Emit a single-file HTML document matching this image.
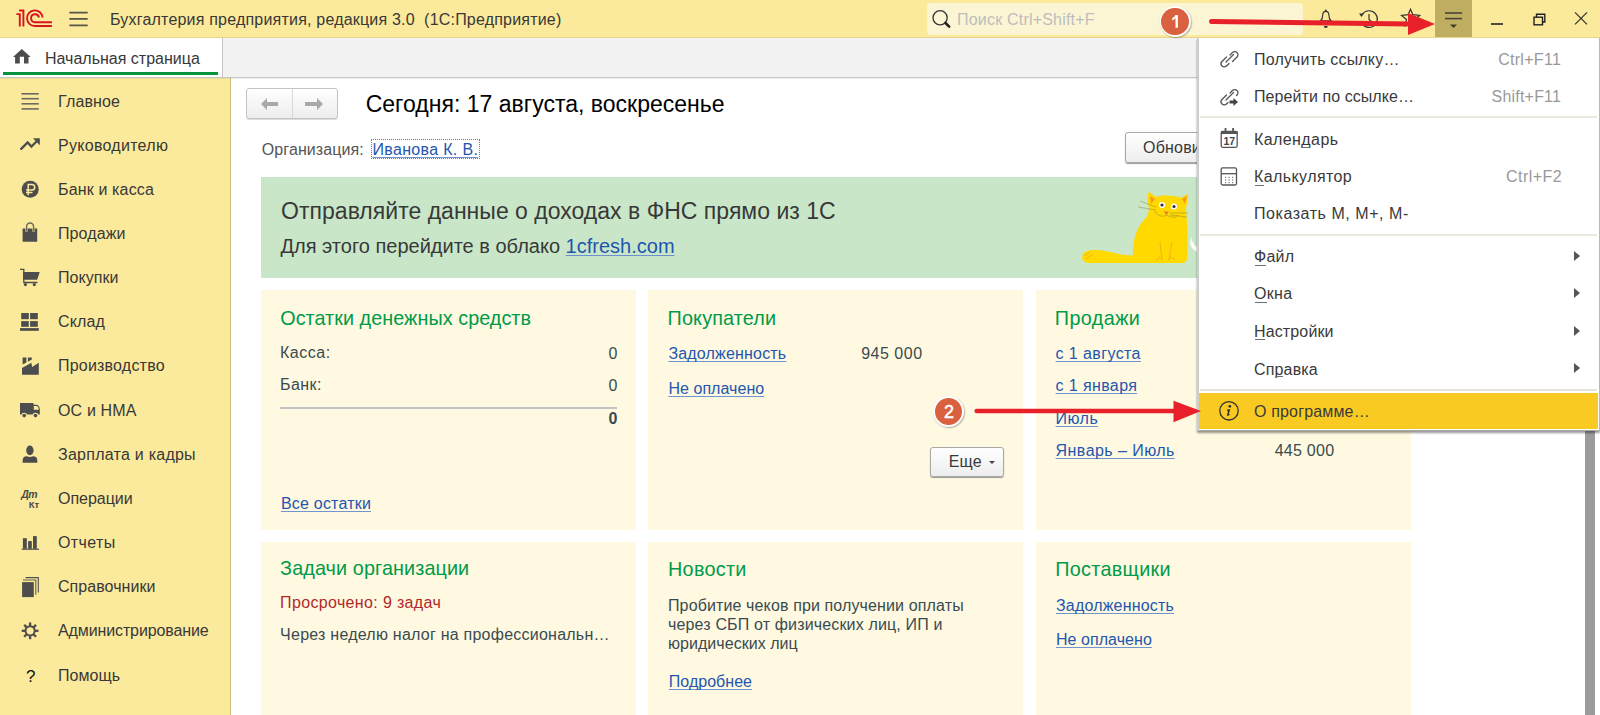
<!DOCTYPE html>
<html><head><meta charset="utf-8"><style>
html,body{margin:0;padding:0;width:1600px;height:715px;overflow:hidden;background:#fff}
body{position:relative;font-family:"Liberation Sans",sans-serif}
.r{position:absolute}
.t{position:absolute;white-space:nowrap;line-height:1}
</style></head><body>
<div class="r" style="left:0px;top:0px;width:1600px;height:37px;background:#FBEA9C"></div>
<div class="r" style="left:0px;top:37px;width:1600px;height:1px;background:#E8D690"></div>
<div class="r" style="left:0px;top:38px;width:1600px;height:39px;background:#F2F2F2"></div>
<div class="r" style="left:0px;top:77px;width:1600px;height:1px;background:#C8C8C8"></div>
<div class="r" style="left:0px;top:38px;width:222px;height:39px;background:#fff"></div>
<div class="r" style="left:222px;top:38px;width:1px;height:39px;background:#C8C8C8"></div>
<div class="r" style="left:3px;top:72px;width:215px;height:3px;background:#08943F"></div>
<div class="r" style="left:0px;top:78px;width:230px;height:637px;background:#FBEA9C"></div>
<div class="r" style="left:230px;top:78px;width:1px;height:637px;background:#CBBD7B"></div>
<div class="r" style="left:231px;top:78px;width:1369px;height:637px;background:#fff"></div>
<div class="r" style="left:0px;top:78px;width:1600px;height:1px;background:rgba(0,0,0,0.07)"></div>
<div class="r" style="left:927px;top:3px;width:376px;height:32px;background:#FCF5D3;border-radius:4px"></div>
<svg class="r" style="left:0;top:0" width="1600" height="715"><g fill="none" stroke="#D7141E" stroke-width="1.9" stroke-linecap="butt"><path d="M16.4 14.1 H19.8 V26.5"/><path d="M19.1 10.5 H23.4 V26.5"/><path d="M42.6 17.5 A7.8 7.8 0 1 0 34.9 26 H51.9"/><path d="M39 17.5 A4 4 0 1 0 34.9 22.2 H51.9"/></g><g stroke="#57544A" stroke-width="1.7" stroke-linecap="round"><path d="M70 12.55 H87"/><path d="M70 18.9 H87"/><path d="M70 25.3 H87"/></g><circle cx="940.1" cy="17.7" r="7.1" fill="none" stroke="#333" stroke-width="1.3"/><path d="M945.5 23 L949.2 26.7" stroke="#222" stroke-width="2.6" stroke-linecap="round"/><g fill="none" stroke="#333" stroke-width="1.2"><path d="M1320.6 20.8 Q1322.6 19.2 1322.7 15.2 Q1322.9 11.4 1325.8 11.4 Q1328.7 11.4 1328.9 15.2 Q1329 19.2 1331 20.8 Z"/></g><circle cx="1325.8" cy="10.5" r="1" fill="#333"/><path d="M1323.8 26 A2 2 0 0 0 1327.8 26 Z" fill="#333"/><g fill="none" stroke="#333" stroke-width="1.2"><path d="M1362.5 14 A8.3 8.3 0 1 1 1361 21"/><path d="M1369 14 V19.5 L1372 22"/></g><path d="M1359 13.5 L1364 13.5 L1361.5 17 Z" fill="#333"/><path d="M1410.5 9.3 L1412.8 14.6 L1419.8 15.5 L1414.5 19.5 L1416 26 L1410.5 22.6 L1405 26 L1406.5 19.5 L1401.5 15.5 L1408.2 14.6 Z" fill="none" stroke="#333" stroke-width="1.2" stroke-linejoin="miter"/><rect x="1435" y="0" width="37" height="37" fill="#BFAE62"/><g stroke="#4A4536" stroke-width="1.6"><path d="M1445 13 H1462"/><path d="M1445 18.6 H1462"/></g><path d="M1450 24.5 H1457 L1453.5 28 Z" fill="#3F3A2E"/><path d="M1491 24 H1503" stroke="#222" stroke-width="1.6"/><g fill="none" stroke="#222" stroke-width="1.4"><rect x="1534" y="17.2" width="8.5" height="7.6"/><path d="M1536.5 17.2 V14.2 H1544.8 V22 H1542.5"/></g><g stroke="#333" stroke-width="1.2"><path d="M1575 12.3 L1587 24.3"/><path d="M1587 12.3 L1575 24.3"/></g><path d="M21.8 49.1 L30.6 57 H28.5 V63.6 H24 V56.7 H19.8 V63.6 H15.1 V57 H13 Z" fill="#4D4D4D"/><g fill="#4D4D4D"><g stroke="#6B6A62" stroke-width="1.6"><path d="M21.5 93.8 H38.8"/><path d="M21.5 98.7 H38.8"/><path d="M21.5 103.8 H38.8"/><path d="M21.5 108.9 H38.8"/></g><path d="M21.2 148.9 L27.6 142.4 L31.4 146.6 L36 142" fill="none" stroke="#4D4D4D" stroke-width="2.3" stroke-linecap="round" stroke-linejoin="miter"/><path d="M33 138.2 H39.8 V145.2 Z"/><circle cx="30.2" cy="189.3" r="8.5"/><g fill="none" stroke="#FBEA9C" stroke-width="1.5"><path d="M28.2 195.3 V184.6 H32 A2.75 2.75 0 0 1 32 190.1 H26"/><path d="M26 192.5 H32.5"/></g><path d="M22.6 228.4 H25.4 V231 Q25.4 232 26.5 232 Q27.6 232 27.6 231 V228.4 H32.4 V231 Q32.4 232 33.5 232 Q34.6 232 34.6 231 V228.4 H37.2 V241.8 H22.6 Z"/><path d="M26.6 231.5 V226.5 A3.5 3.5 0 0 1 33.6 226.5 V231.5" fill="none" stroke="#6B695A" stroke-width="1.4"/><path d="M20 269.4 H23.8 V282.5 H37.5" fill="none" stroke="#4D4D4D" stroke-width="1.3"/><path d="M23.1 272.1 H39.7 L37.2 279.8 H23.1 Z"/><circle cx="25.4" cy="284.6" r="1.6"/><circle cx="34.3" cy="284.6" r="1.6"/><rect x="21.2" y="313" width="7.6" height="6.2"/><rect x="30.1" y="313" width="7.7" height="6.2"/><rect x="21.2" y="321.1" width="7.6" height="5.7"/><rect x="30.1" y="321.1" width="7.7" height="5.7"/><rect x="20" y="328.1" width="18.8" height="2.7"/><path d="M22 368.1 L31.4 362.7 L32.1 367.1 L38.8 362.7 V374.8 H22 Z"/><path d="M22.6 357.4 H26.4 V362.4 L22.6 364.6 Z"/><path d="M27.9 357.4 H31.8 V359.5 L27.9 361.7 Z"/><path d="M20 403 H33.5 V404.7 H37.3 Q39.8 406 39.8 409 V414.5 H20 Z"/><path d="M33.8 406 H37.2 Q38.8 407 38.8 409.8 H33.8 Z" fill="#FBEA9C"/><circle cx="24.2" cy="415.6" r="2.9" fill="#FBEA9C"/><circle cx="35.5" cy="415.6" r="2.9" fill="#FBEA9C"/><circle cx="24.2" cy="415.6" r="1.8"/><circle cx="35.5" cy="415.6" r="1.8"/><ellipse cx="29.9" cy="450.4" rx="3.7" ry="4.8"/><path d="M22.6 462.8 V460.5 Q22.6 456.2 26.8 456.2 Q29.9 457.6 33 456.2 Q37.3 456.2 37.3 460.5 V462.8 Z"/><rect x="22.9" y="538.2" width="3.9" height="10.6"/><rect x="28.1" y="541.1" width="3.7" height="7.7"/><rect x="33" y="536.1" width="3.8" height="12.7"/><rect x="21.7" y="548.6" width="17.3" height="1.2"/><rect x="22.1" y="582.1" width="11.7" height="15"/><path d="M22.9 580 H35.8 V594.8" fill="none" stroke="#5F5D52" stroke-width="1.1"/><path d="M25.6 577.6 H38.3 V592.5" fill="none" stroke="#4D4D4D" stroke-width="1.1"/><g stroke="#4D4D4D" stroke-width="2.3"><path d="M34.90 630.80 L38.50 630.80"/><path d="M33.49 634.19 L36.04 636.74"/><path d="M30.10 635.60 L30.10 639.20"/><path d="M26.71 634.19 L24.16 636.74"/><path d="M25.30 630.80 L21.70 630.80"/><path d="M26.71 627.41 L24.16 624.86"/><path d="M30.10 626.00 L30.10 622.40"/><path d="M33.49 627.41 L36.04 624.86"/></g><circle cx="30.1" cy="630.8" r="4.6" fill="none" stroke="#4D4D4D" stroke-width="2"/></g></svg>
<div class="t " style="left:110px;top:11.80px;font-size:16px;color:#383838;letter-spacing:0.2px">Бухгалтерия предприятия, редакция 3.0&nbsp; (1С:Предприятие)</div>
<div class="t " style="left:957px;top:11.65px;font-size:16px;color:#BDBDBD;;letter-spacing:0.2px">Поиск Ctrl+Shift+F</div>
<div class="t " style="left:45px;top:50.65px;font-size:16px;color:#383838;letter-spacing:0">Начальная страница</div>
<div class="t " style="left:58px;top:93.55px;font-size:16px;color:#383838;letter-spacing:0.142px">Главное</div>
<div class="t " style="left:58px;top:137.70px;font-size:16px;color:#383838;letter-spacing:0.286px">Руководителю</div>
<div class="t " style="left:58px;top:181.85px;font-size:16px;color:#383838;letter-spacing:0.15px">Банк и касса</div>
<div class="t " style="left:58px;top:226.00px;font-size:16px;color:#383838;letter-spacing:0.092px">Продажи</div>
<div class="t " style="left:58px;top:270.15px;font-size:16px;color:#383838;letter-spacing:0.042px">Покупки</div>
<div class="t " style="left:58px;top:314.30px;font-size:16px;color:#383838;letter-spacing:0.137px">Склад</div>
<div class="t " style="left:58px;top:358.45px;font-size:16px;color:#383838;letter-spacing:0.205px">Производство</div>
<div class="t " style="left:58px;top:402.60px;font-size:16px;color:#383838;letter-spacing:0.15px">ОС и НМА</div>
<div class="t " style="left:58px;top:446.75px;font-size:16px;color:#383838;letter-spacing:0.25px">Зарплата и кадры</div>
<div class="t " style="left:58px;top:490.90px;font-size:16px;color:#383838;letter-spacing:-0.021px">Операции</div>
<div class="t " style="left:58px;top:535.05px;font-size:16px;color:#383838;letter-spacing:0.39px">Отчеты</div>
<div class="t " style="left:58px;top:579.20px;font-size:16px;color:#383838;letter-spacing:0.045px">Справочники</div>
<div class="t " style="left:58px;top:623.35px;font-size:16px;color:#383838;letter-spacing:-0.116px">Администрирование</div>
<div class="t " style="left:58px;top:667.50px;font-size:16px;color:#383838;letter-spacing:0.05px">Помощь</div>
<div class="t " style="left:26px;top:668.01px;font-size:17px;color:#111;">?</div>
<div class="t " style="left:21.2px;top:489.31px;font-size:10.5px;color:#4A4A4A;font-weight:bold;font-style:italic;letter-spacing:-0.5px">Дт</div>
<div class="t " style="left:28.8px;top:499.76px;font-size:9.5px;color:#4A4A4A;font-weight:bold;letter-spacing:-0.2px">Кт</div>
<div class="r" style="left:246px;top:88px;width:92px;height:31px;background:linear-gradient(#fff,#EDEDED);border:1px solid #C4C4C4;border-radius:3px;box-sizing:border-box;box-shadow:0 1px 0 #ddd"></div>
<div class="r" style="left:292px;top:89px;width:1px;height:29px;background:#D8D8D8"></div>
<svg class="r" style="left:0;top:0" width="400" height="130"><g fill="#A9A9A9"><path d="M261 104 L267 98 V102 H278 V106 H267 V110 Z"/><path d="M323 104 L317 98 V102 H305 V106 H317 V110 Z"/></g></svg>
<div class="t " style="left:365.7px;top:92.73px;font-size:23px;color:#000;;letter-spacing:0.01px">Сегодня: 17 августа, воскресенье</div>
<div class="t " style="left:261.8px;top:142.05px;font-size:16px;color:#555;;letter-spacing:0.091px">Организация:</div>
<div class="t " style="left:372.5px;top:142.05px;font-size:16px;color:#2456B0;text-decoration:underline;text-underline-offset:1.6px;text-decoration-thickness:1.4px;text-decoration-skip-ink:none;text-decoration-color:#7193D0;letter-spacing:0.325px">Иванова К. В.</div>
<div class="r" style="left:371px;top:139px;width:109px;height:20px;border:1px dotted #777;box-sizing:border-box"></div>
<div class="r" style="left:1125px;top:132px;width:120px;height:31px;background:linear-gradient(#fff,#EDEDED);border:1px solid #A8A8A8;border-radius:3px;box-sizing:border-box;box-shadow:0 1px 1px #999"></div>
<div class="t " style="left:1143px;top:139.75px;font-size:16px;color:#383838;;letter-spacing:0.2px">Обновить</div>
<div class="r" style="left:261px;top:177px;width:1150px;height:101px;background:#C9E7C8"></div>
<div class="t " style="left:281.1px;top:199.83px;font-size:23px;color:#383838;;letter-spacing:0.018px">Отправляйте данные о доходах в ФНС прямо из 1С</div>
<div class="t " style="left:280.5px;top:235.87px;font-size:20px;color:#383838;">Для этого перейдите в облако <span style="color:#1F55B0;text-decoration:underline;text-underline-offset:1.6px;text-decoration-thickness:1.4px;text-decoration-skip-ink:none;text-decoration-color:#6D8FD0">1cfresh.com</span></div>
<svg class="r" style="left:1070px;top:180px" width="130" height="100" viewBox="0 0 130 100">
<g fill="#FFD900">
<path d="M79 28 C76 18 78 14 79 12 L86 17 C92 15 105 15 110 18 L118 14 C118 20 117 24 116 28 C117 40 118 60 117 77 C117 82 115 83 112 83 L20 83 C12 83 11 78 13 74 C16 69 28 69 40 72 C52 75 60 76 63 75 C63 60 66 48 74 40 C77 37 79 33 79 28 Z"/>
</g>
<path d="M80 16 L85 19 L81 24 Z" fill="#F49B1F"/>
<path d="M117 16 L112 19 L115 24 Z" fill="#F49B1F"/>
<circle cx="92" cy="25" r="3" fill="#fff"/><circle cx="104" cy="26.5" r="3" fill="#fff"/>
<circle cx="92" cy="25" r="1.6" fill="#333"/><circle cx="104" cy="26.5" r="1.6" fill="#333"/>
<path d="M94 31 L99 32 L96 35 Z" fill="#E6782A"/>
<g fill="none" stroke="#8C7C3C" stroke-width="0.6" opacity="0.75">
<path d="M85 31 C88 37 93 37 97 35 C101 38 106 38 108 35"/>
<path d="M70 21 L86 27"/><path d="M68 27 L86 30"/><path d="M100 33 L118 33"/><path d="M100 35 L117 37"/>
</g>
<g fill="none" stroke="#F0A020" stroke-width="0.7">
<path d="M90 62 L92 80"/><path d="M102 62 L99 80"/><path d="M86 80 L90 77 L93 80"/><path d="M98 80 L101 77 L105 80"/>
<path d="M14 76 L20 72"/><path d="M16 79 L23 74"/>
</g>
</svg>
<svg class="r" style="left:1188px;top:236px" width="10" height="18"><path d="M3 1 Q5 9 10 12 L10 16 Q4 14 2 8 Z" fill="#fff" opacity="0.9"/></svg>
<div class="r" style="left:261px;top:290px;width:375px;height:240px;background:#FEF9E0"></div>
<div class="r" style="left:648px;top:290px;width:375px;height:240px;background:#FEF9E0"></div>
<div class="r" style="left:1036px;top:290px;width:375px;height:240px;background:#FEF9E0"></div>
<div class="r" style="left:261px;top:542px;width:375px;height:173px;background:#FEF9E0"></div>
<div class="r" style="left:648px;top:542px;width:375px;height:173px;background:#FEF9E0"></div>
<div class="r" style="left:1036px;top:542px;width:375px;height:173px;background:#FEF9E0"></div>
<div class="t " style="left:280.2px;top:308.74px;font-size:19.8px;color:#009A4A;;letter-spacing:0.061px">Остатки денежных средств</div>
<div class="t " style="left:280px;top:345.45px;font-size:16px;color:#3A4B50;;letter-spacing:0.52px">Касса:</div>
<div class="t " style="left:280px;top:377.35px;font-size:16px;color:#3A4B50;;letter-spacing:0.425px">Банк:</div>
<div class="t" style="left:417.5px;top:345.95px;width:200px;text-align:right;font-size:16px;color:#3A4B50;">0</div>
<div class="t" style="left:417.5px;top:378.05px;width:200px;text-align:right;font-size:16px;color:#3A4B50;">0</div>
<div class="r" style="left:280px;top:407px;width:337px;height:2px;background:#C4C4C4"></div>
<div class="t" style="left:417.5px;top:410.85px;width:200px;text-align:right;font-size:16px;color:#3A4B50;font-weight:bold">0</div>
<div class="t " style="left:281px;top:495.85px;font-size:16px;color:#2456B0;text-decoration:underline;text-underline-offset:1.6px;text-decoration-thickness:1.4px;text-decoration-skip-ink:none;text-decoration-color:#7193D0;letter-spacing:0.2px">Все остатки</div>
<div class="t " style="left:667.6px;top:308.84px;font-size:19.8px;color:#009A4A;;letter-spacing:0.156px">Покупатели</div>
<div class="t " style="left:668.4px;top:346.25px;font-size:16px;color:#2456B0;text-decoration:underline;text-underline-offset:1.6px;text-decoration-thickness:1.4px;text-decoration-skip-ink:none;text-decoration-color:#7193D0;letter-spacing:0.183px">Задолженность</div>
<div class="t " style="left:861.2px;top:346.25px;font-size:16px;color:#3A4B50;;letter-spacing:0.5px">945 000</div>
<div class="t " style="left:668.4px;top:380.55px;font-size:16px;color:#2456B0;text-decoration:underline;text-underline-offset:1.6px;text-decoration-thickness:1.4px;text-decoration-skip-ink:none;text-decoration-color:#7193D0;letter-spacing:0.05px">Не оплачено</div>
<div class="r" style="left:930px;top:447px;width:74px;height:30px;background:linear-gradient(#fff,#EDEDED);border:1px solid #A8A8A8;border-radius:3px;box-sizing:border-box;box-shadow:0 1px 1px #999"></div>
<div class="t " style="left:948.7px;top:453.65px;font-size:16px;color:#383838;;letter-spacing:0.2px">Еще</div>
<div class="r" style="left:989px;top:461px;width:0;height:0;border-left:3.5px solid transparent;border-right:3.5px solid transparent;border-top:3.5px solid #444"></div>
<div class="t " style="left:1054.8px;top:309.04px;font-size:19.8px;color:#009A4A;;letter-spacing:0.4px">Продажи</div>
<div class="t " style="left:1055.6px;top:345.55px;font-size:16px;color:#2456B0;text-decoration:underline;text-underline-offset:1.6px;text-decoration-thickness:1.4px;text-decoration-skip-ink:none;text-decoration-color:#7193D0;letter-spacing:0.4px">с 1 августа</div>
<div class="t " style="left:1055.6px;top:378.25px;font-size:16px;color:#2456B0;text-decoration:underline;text-underline-offset:1.6px;text-decoration-thickness:1.4px;text-decoration-skip-ink:none;text-decoration-color:#7193D0;letter-spacing:0.378px">с 1 января</div>
<div class="t " style="left:1055.6px;top:411.05px;font-size:16px;color:#2456B0;text-decoration:underline;text-underline-offset:1.6px;text-decoration-thickness:1.4px;text-decoration-skip-ink:none;text-decoration-color:#7193D0;letter-spacing:0.433px">Июль</div>
<div class="t " style="left:1055.6px;top:443.25px;font-size:16px;color:#2456B0;text-decoration:underline;text-underline-offset:1.6px;text-decoration-thickness:1.4px;text-decoration-skip-ink:none;text-decoration-color:#7193D0;letter-spacing:0.442px">Январь – Июль</div>
<div class="t " style="left:1274.7px;top:443.25px;font-size:16px;color:#3A4B50;;letter-spacing:0.25px">445 000</div>
<div class="t " style="left:280.1px;top:559.34px;font-size:19.8px;color:#009A4A;;letter-spacing:0.112px">Задачи организации</div>
<div class="t " style="left:280.1px;top:594.95px;font-size:16px;color:#B3282B;;letter-spacing:0.35px">Просрочено: 9 задач</div>
<div class="t " style="left:280.1px;top:626.85px;font-size:16px;color:#3A4B50;;letter-spacing:0.237px">Через неделю налог на профессиональн…</div>
<div class="t " style="left:668.0px;top:559.84px;font-size:19.8px;color:#009A4A;;letter-spacing:0.3px">Новости</div>
<div class="t " style="left:668.0px;top:597.55px;font-size:16px;color:#3A4B50;;letter-spacing:0.124px">Пробитие чеков при получении оплаты</div>
<div class="t " style="left:668.0px;top:616.55px;font-size:16px;color:#3A4B50;;letter-spacing:0.153px">через СБП от физических лиц, ИП и</div>
<div class="t " style="left:668.0px;top:635.65px;font-size:16px;color:#3A4B50;;letter-spacing:0.043px">юридических лиц</div>
<div class="t " style="left:668.8px;top:673.75px;font-size:16px;color:#2456B0;text-decoration:underline;text-underline-offset:1.6px;text-decoration-thickness:1.4px;text-decoration-skip-ink:none;text-decoration-color:#7193D0;letter-spacing:0.025px">Подробнее</div>
<div class="t " style="left:1055.2px;top:560.34px;font-size:19.8px;color:#009A4A;;letter-spacing:0.322px">Поставщики</div>
<div class="t " style="left:1056px;top:598.35px;font-size:16px;color:#2456B0;text-decoration:underline;text-underline-offset:1.6px;text-decoration-thickness:1.4px;text-decoration-skip-ink:none;text-decoration-color:#7193D0;letter-spacing:0.183px">Задолженность</div>
<div class="t " style="left:1056px;top:632.35px;font-size:16px;color:#2456B0;text-decoration:underline;text-underline-offset:1.6px;text-decoration-thickness:1.4px;text-decoration-skip-ink:none;text-decoration-color:#7193D0;letter-spacing:0.05px">Не оплачено</div>
<div class="r" style="left:1585px;top:78px;width:10px;height:637px;background:#9B9B9B"></div>
<div class="r" style="left:1197px;top:38px;width:403px;height:393px;background:#fff;border-left:2px solid #CDCDCD;border-right:1.5px solid #B8B8B8;border-bottom:1px solid #AAA;box-sizing:border-box;box-shadow:0 2px 2px rgba(0,0,0,0.4)"></div>

<div class="t " style="left:1254px;top:51.95px;font-size:16px;color:#3A3A3A;;letter-spacing:0.173px">Получить ссылку…</div>
<div class="t " style="left:1498.2px;top:51.65px;font-size:16px;color:#999;;letter-spacing:0.286px">Ctrl+F11</div>
<div class="t " style="left:1254px;top:89.05px;font-size:16px;color:#3A3A3A;;letter-spacing:0.071px">Перейти по ссылке…</div>
<div class="t " style="left:1491.5px;top:89.05px;font-size:16px;color:#999;;letter-spacing:0.213px">Shift+F11</div>
<div class="r" style="left:1200px;top:116px;width:397px;height:2px;background:#ECE9DE"></div>
<div class="t " style="left:1254px;top:131.65px;font-size:16px;color:#3A3A3A;;letter-spacing:0.412px">Календарь</div>
<div class="t " style="left:1254px;top:168.85px;font-size:16px;color:#3A3A3A;;letter-spacing:0.41px">Калькулятор</div>
<div class="t " style="left:1506px;top:169.05px;font-size:16px;color:#999;;letter-spacing:0.45px">Ctrl+F2</div>
<div class="t " style="left:1254px;top:206.45px;font-size:16px;color:#3A3A3A;;letter-spacing:0.553px">Показать М, М+, М-</div>
<div class="r" style="left:1200px;top:234px;width:397px;height:2px;background:#ECE9DE"></div>
<div class="t " style="left:1254px;top:248.75px;font-size:16px;color:#3A3A3A;;letter-spacing:0.267px">Файл</div>
<div class="t " style="left:1254px;top:286.05px;font-size:16px;color:#3A3A3A;;letter-spacing:0.333px">Окна</div>
<div class="t " style="left:1254px;top:324.25px;font-size:16px;color:#3A3A3A;;letter-spacing:0.138px">Настройки</div>
<div class="t " style="left:1254px;top:361.55px;font-size:16px;color:#3A3A3A;;letter-spacing:0.167px">Справка</div>
<div class="r" style="left:1574px;top:250.5px;width:0;height:0;border-top:5.5px solid transparent;border-bottom:5.5px solid transparent;border-left:6px solid #555"></div>
<div class="r" style="left:1574px;top:287.5px;width:0;height:0;border-top:5.5px solid transparent;border-bottom:5.5px solid transparent;border-left:6px solid #555"></div>
<div class="r" style="left:1574px;top:325.5px;width:0;height:0;border-top:5.5px solid transparent;border-bottom:5.5px solid transparent;border-left:6px solid #555"></div>
<div class="r" style="left:1574px;top:363.2px;width:0;height:0;border-top:5.5px solid transparent;border-bottom:5.5px solid transparent;border-left:6px solid #555"></div>
<div class="r" style="left:1200px;top:389px;width:397px;height:1.5px;background:#E6E2D6"></div>
<div class="r" style="left:1199px;top:392.5px;width:398.5px;height:36.5px;background:#F9CB22"></div>
<div class="r" style="left:1301px;top:147px;width:7.6px;height:1px;background:#707070"></div>
<div class="r" style="left:1254.6px;top:184.5px;width:9.0px;height:1px;background:#707070"></div>
<div class="r" style="left:1254.8px;top:264.5px;width:11.7px;height:1px;background:#707070"></div>
<div class="r" style="left:1254.8px;top:301.7px;width:12.5px;height:1px;background:#707070"></div>
<div class="r" style="left:1254.8px;top:339px;width:9.8px;height:1px;background:#707070"></div>
<div class="r" style="left:1274.5px;top:376.2px;width:8.7px;height:1px;background:#707070"></div>
<div class="t " style="left:1254px;top:403.55px;font-size:16px;color:#3A3A3A;;letter-spacing:0.164px">О программе…</div>
<svg class="r" style="left:0;top:0" width="1600" height="715"><g fill="none" stroke="#555" stroke-width="1.3" stroke-linecap="round"><path d="M1226.5 57 L1222 61.5 A3 3 0 0 0 1226.5 66 L1229 63.5"/><path d="M1230 55 L1232.5 52.5 A3 3 0 0 1 1237 57 L1232.5 61.5"/><path d="M1226 62 L1233.5 54.5"/><path d="M1226.5 95 L1222 99.5 A3 3 0 0 0 1226.5 104 L1228 102.5"/><path d="M1230 93 L1232.5 90.5 A3 3 0 0 1 1237 95 L1236.5 95.5"/><path d="M1226 100 L1233.5 92.5"/></g><path d="M1229.5 100.5 H1233.5 V98 L1238 102 L1233.5 106 V103.5 H1229.5 Z" fill="#444"/><g fill="none" stroke="#555" stroke-width="1.3"><rect x="1221.2" y="131.5" width="16" height="15.8" rx="1.5"/><rect x="1221.2" y="167.8" width="15.3" height="17.2" rx="1.5"/><path d="M1221.2 173.7 H1236.5"/></g><rect x="1221" y="131" width="16.5" height="3" fill="#555"/><rect x="1224.6" y="128" width="1.8" height="4" fill="#555"/><rect x="1232.2" y="128" width="1.8" height="4" fill="#555"/><g fill="#777"><rect x="1225.0" y="176.8" width="1.2" height="1.2"/><rect x="1225.0" y="179.4" width="1.2" height="1.2"/><rect x="1225.0" y="182.0" width="1.2" height="1.2"/><rect x="1228.5" y="176.8" width="1.2" height="1.2"/><rect x="1228.5" y="179.4" width="1.2" height="1.2"/><rect x="1228.5" y="182.0" width="1.2" height="1.2"/><rect x="1232.0" y="176.8" width="1.2" height="1.2"/><rect x="1232.0" y="179.4" width="1.2" height="1.2"/><rect x="1232.0" y="182.0" width="1.2" height="1.2"/></g><circle cx="1229" cy="410.8" r="9.2" fill="none" stroke="#333" stroke-width="1.3"/><circle cx="1229.8" cy="406.3" r="1.4" fill="#333"/><path d="M1227 409.5 L1230.3 409.2 L1228.7 414.5 L1230.8 414 L1228 416 L1226.8 415.5 L1228 411 L1227 410.8 Z" fill="#333"/><text x="1229.3" y="144.8" text-anchor="middle" font-family="Liberation Sans" font-weight="bold" font-size="10.5" fill="#444">17</text></svg>
<div class="r" style="left:1159.5px;top:5.899999999999999px;width:31px;height:31px;border-radius:50%;background:#fff;box-shadow:0.7px 0.9px 1.5px rgba(0,0,0,0.35)"></div>
<div class="r" style="left:1161.4px;top:7.799999999999999px;width:27.2px;height:27.2px;border-radius:50%;background:#DA6140"></div>
<div class="r" style="left:933.1px;top:396.1px;width:31px;height:31px;border-radius:50%;background:#fff;box-shadow:0.7px 0.9px 1.5px rgba(0,0,0,0.35)"></div>
<div class="r" style="left:935.0px;top:398.0px;width:27.2px;height:27.2px;border-radius:50%;background:#DA6140"></div>
<div class="t " style="left:944.1px;top:402.76px;font-size:18px;color:#fff;letter-spacing:0;-webkit-text-stroke:0.5px #fff;width:10px;text-align:center">2</div>
<svg class="r" style="left:0;top:0" width="1600" height="715" viewBox="0 0 1600 715">
<path d="M1175.5 14.9 H1177.9 V27.8 H1175.5 V18.2 Q1174 19.6 1172.1 20.4 V18.2 Q1174.3 17 1175.5 14.9 Z" fill="#fff"/>
<path d="M1211.5 21.6 L1410 24" stroke="#E8202A" stroke-width="5" stroke-linecap="round"/>
<path d="M1408 13 L1435 24 L1408 35 Z" fill="#E8202A"/>
<path d="M976.7 411 L1176 411" stroke="#E8202A" stroke-width="4.5" stroke-linecap="round"/>
<path d="M1173.5 400.8 L1201 411 L1173.5 422.2 Z" fill="#E8202A"/>
</svg>
</body></html>
